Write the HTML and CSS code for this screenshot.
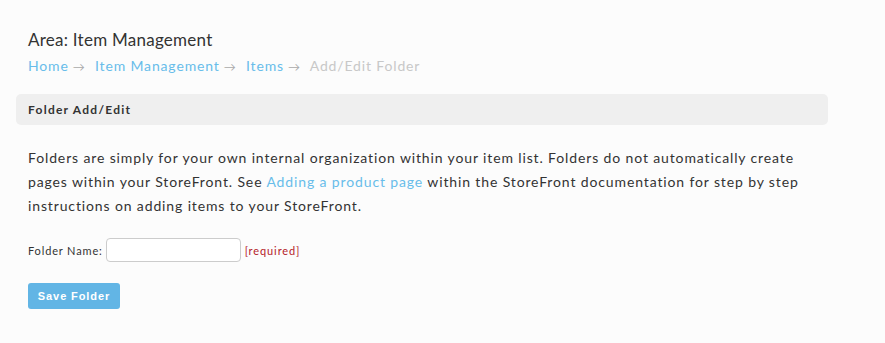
FILE: index.html
```html
<!DOCTYPE html>
<html lang="en">
<head>
  <meta charset="UTF-8">
  <title>Add/Edit Folder</title>
  <link rel="stylesheet" href="styles.css">
</head>
<body>
  <div class="page">
    <h1 class="area-title">Area: Item Management</h1>
    <div class="breadcrumb">
      <a href="#">Home</a><span class="sep">&rarr;</span>
      <a href="#">Item Management</a><span class="sep">&rarr;</span>
      <a href="#">Items</a><span class="sep">&rarr;</span>
      <span class="current">Add/Edit Folder</span>
    </div>

    <div class="panel-head">Folder Add/Edit</div>

    <p class="intro">Folders are simply for your own internal organization within your item list. Folders do not automatically create pages within your StoreFront. See <a href="#">Adding a product page</a> within the StoreFront documentation for step by step instructions on adding items to your StoreFront.</p>

    <form class="folder-form">
      <div class="form-row">
        <label for="folderName">Folder Name:</label>
        <input type="text" id="folderName">
        <span class="required">[required]</span>
      </div>
      <button type="submit" class="save-btn">Save Folder</button>
    </form>
  </div>
</body>
</html>
```

FILE: styles.css
```css
body {
  margin: 0;
  background: #fcfcfc;
  font-family: Lato, "Open Sans", sans-serif;
  color: #333;
}
.page {
  padding: 28px 57px 0 16px;
}
.area-title {
  margin: 0 0 0 12px;
  font-size: 17px;
  font-weight: normal;
  line-height: 24px;
  letter-spacing: 0.25px;
  color: #333;
}
.breadcrumb {
  margin: 4px 0 0 12px;
  font-size: 14px;
  letter-spacing: 0.85px;
  line-height: 20px;
}
.breadcrumb a {
  color: #68bdea;
  text-decoration: none;
}
.breadcrumb .sep {
  color: #aaa;
  margin: 0 5px 0 4px;
  font-size: 12px;
}
.breadcrumb .current {
  color: #c8c8c8;
}
.panel-head {
  margin-top: 17px;
  height: 31px;
  line-height: 31px;
  padding-left: 12px;
  background: #efefef;
  border-radius: 5px;
  font-size: 12px;
  font-weight: bold;
  letter-spacing: 1.25px;
  color: #333;
}
.intro {
  margin: 21px 0 0 12px;
  font-size: 14px;
  line-height: 24px;
  letter-spacing: 0.87px;
  color: #333;
}
.intro a {
  color: #68bdea;
  text-decoration: none;
}
.folder-form {
  margin: 20px 0 0 12px;
}
.form-row {
  display: flex;
  align-items: center;
  height: 24px;
}
.form-row label {
  font-size: 11px;
  letter-spacing: 0.85px;
  color: #333;
  margin-right: 3px;
}
.form-row input {
  width: 135px;
  height: 24px;
  box-sizing: border-box;
  border: 1px solid #ccc;
  border-radius: 4px;
  background: #fff;
  padding: 2px 5px;
}
.required {
  margin-left: 4px;
  font-size: 11px;
  letter-spacing: 0.9px;
  color: #b5212a;
}
.save-btn {
  margin-top: 21px;
  width: 92px;
  height: 26px;
  border: none;
  border-radius: 3px;
  background: #62b5e5;
  color: #fff;
  font-family: "Liberation Sans", Arial, sans-serif;
  font-size: 11px;
  font-weight: bold;
  letter-spacing: 0.9px;
  padding: 0;
}
```
